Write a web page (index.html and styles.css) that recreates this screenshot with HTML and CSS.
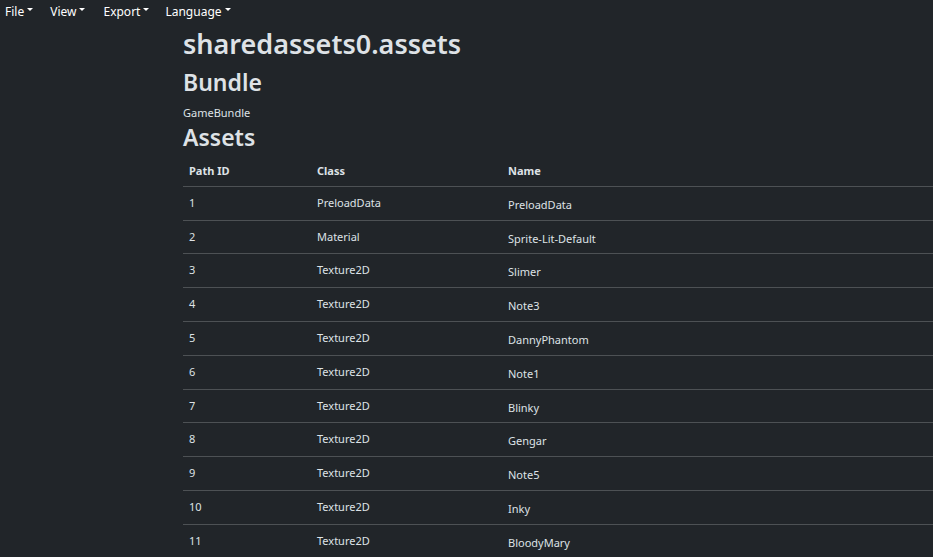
FILE: index.html
```html
<!DOCTYPE html>
<html>
<head>
<meta charset="utf-8">
<link rel="stylesheet" href="styles.css">
</head>
<body>
<nav class="navbar">
  <span class="menu">File</span>
  <span class="menu">View</span>
  <span class="menu">Export</span>
  <span class="menu">Language</span>
</nav>
<main class="content">
  <h1 class="title">sharedassets0.assets</h1>
  <h2 class="section bundle-head">Bundle</h2>
  <p class="bundle">GameBundle</p>
  <h2 class="section assets-head">Assets</h2>
  <table class="assets">
    <thead>
      <tr><th class="c-id">Path ID</th><th class="c-class">Class</th><th class="c-name">Name</th></tr>
    </thead>
    <tbody>
      <tr><td>1</td><td>PreloadData</td><td class="name">PreloadData</td></tr>
      <tr><td>2</td><td>Material</td><td class="name">Sprite-Lit-Default</td></tr>
      <tr><td>3</td><td>Texture2D</td><td class="name">Slimer</td></tr>
      <tr><td>4</td><td>Texture2D</td><td class="name">Note3</td></tr>
      <tr><td>5</td><td>Texture2D</td><td class="name">DannyPhantom</td></tr>
      <tr><td>6</td><td>Texture2D</td><td class="name">Note1</td></tr>
      <tr><td>7</td><td>Texture2D</td><td class="name">Blinky</td></tr>
      <tr><td>8</td><td>Texture2D</td><td class="name">Gengar</td></tr>
      <tr><td>9</td><td>Texture2D</td><td class="name">Note5</td></tr>
      <tr><td>10</td><td>Texture2D</td><td class="name">Inky</td></tr>
      <tr><td>11</td><td>Texture2D</td><td class="name">BloodyMary</td></tr>
    </tbody>
  </table>
</main>
</body>
</html>
```
FILE: styles.css
```css
html, body {
  margin: 0;
  padding: 0;
  background: #212529;
  color: #dee2e6;
  font-family: "Noto Sans", "Open Sans", sans-serif;
  overflow: hidden;
  height: 557px;
}
.navbar {
  display: flex;
  height: 22px;
  align-items: center;
  padding-left: 5px;
  font-size: 12px;
  color: #ffffff;
}
.menu {
  display: inline-flex;
  align-items: center;
  margin-right: 17px;
}
.menu:nth-child(2) { margin-right: 18px; }
.menu:nth-child(3) { margin-right: 16px; }
.menu::after {
  content: "";
  display: inline-block;
  margin-left: 3px;
  border-top: 3px solid #fff;
  border-left: 3px solid transparent;
  border-right: 3px solid transparent;
  margin-top: -4px;
}
.content {
  margin-left: 183px;
}
.title {
  margin: 5px 0 0;
  font-size: 27px;
  font-weight: 600;
  line-height: 34px;
}
.section {
  margin: 0;
  font-size: 23px;
  font-weight: 600;
  line-height: 30px;
}
.bundle-head { margin-top: 6px; }
.bundle {
  margin: 8px 0 1px;
  font-size: 11px;
  line-height: 16px;
}
.assets {
  border-collapse: collapse;
  width: 760px;
  font-size: 11px;
  margin-top: 3px;
}
.assets th, .assets td {
  text-align: left;
  padding: 8px 6px;
  line-height: 16.8px;
  border-bottom: 1px solid #4d5154;
  vertical-align: top;
}
.assets th {
  font-weight: 700;
  padding-bottom: 6px;
}
.c-id { width: 116px; }
.c-class { width: 179px; }
.assets td.name {
  padding-top: 10px;
  padding-bottom: 6px;
}
```
